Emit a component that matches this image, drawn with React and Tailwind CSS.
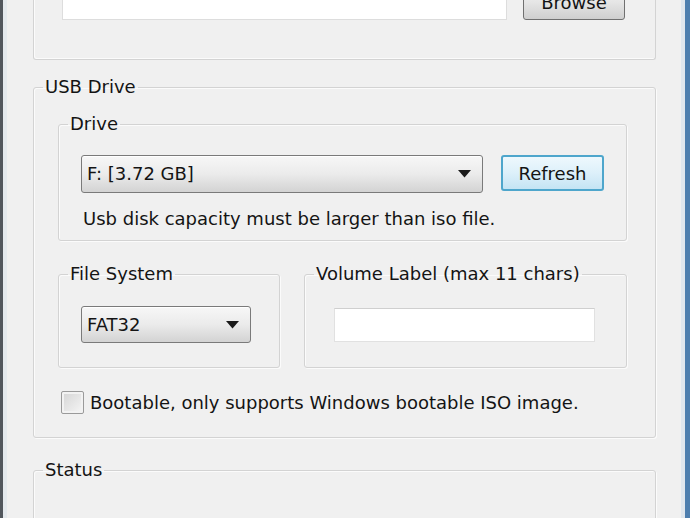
import React from 'react';

const font = "font-['DejaVu_Sans','Verdana',sans-serif]";

function Arrow() {
  return (
    <svg width="13" height="8" viewBox="0 0 13 8" className="shrink-0">
      <path d="M0 0 H13 L6.5 7.5 Z" fill="#1a1a1a" />
    </svg>
  );
}

function Combo({ value, className }) {
  return (
    <div
      className={`flex shrink-0 items-center justify-between rounded-[3px] border border-[#7a7a7a] bg-gradient-to-b from-[#f7f7f7] via-[#ebebeb] to-[#d3d3d3] pl-[5px] pr-[11px] text-[18px] leading-none text-[#141414] shadow-[inset_0_1px_0_#fff] ${className}`}
    >
      <span>{value}</span>
      <Arrow />
    </div>
  );
}

function Group({ label, className = '', children }) {
  return (
    <fieldset
      className={`shrink-0 rounded-[3px] border border-[#d3d3d3] shadow-[inset_1px_1px_0_#fbfbfb,1px_1px_0_#fbfbfb] ${className}`}
    >
      <legend className="ml-[9px] px-[2px] text-[18px] leading-[20px] text-[#141414]">{label}</legend>
      {children}
    </fieldset>
  );
}

export default function App() {
  return (
    <div className={`flex h-[518px] w-[690px] overflow-hidden bg-[#f0f0f0] ${font}`}>
      {/* window frame, left */}
      <div className="w-[3px] bg-[#52575d]" />
      <div className="w-[4px] bg-[#e4e9ed]" />

      <div className="flex flex-1 flex-col pl-[26px] pr-[25px]">
        {/* ISO path group (top cut off) */}
        <div className="mt-[-30px] flex h-[90px] shrink-0 items-end rounded-b-[3px] border-x border-b border-[#d3d3d3] pb-[39px] pl-[28px] shadow-[inset_1px_-1px_0_#fbfbfb]">
          <div className="h-[30px] w-[445px] border border-[#dddddd] bg-white" />
          <div className="ml-[16px] flex h-[36px] w-[102px] items-center justify-center rounded-[3px] border border-[#707070] bg-gradient-to-b from-[#f4f4f4] via-[#e6e6e6] to-[#cfcfcf] text-[18px] text-[#141414] shadow-[inset_0_1px_0_#fff]">
            Browse
          </div>
        </div>

        {/* USB Drive */}
        <Group label="USB Drive" className="mt-[17px] pb-[23px]">
          <Group label="Drive" className="ml-[24px] mr-[28px] mt-[17px] pb-[11px]">
            <div className="ml-[22px] mt-[21px] flex items-start">
              <Combo value="F: [3.72 GB]" className="h-[38px] w-[402px]" />
              <div className="ml-[18px] flex h-[36px] w-[103px] items-center justify-center rounded-[3px] border-2 border-[#4ea6cc] bg-gradient-to-b from-[#eef8fd] via-[#ddf0fa] to-[#c4e4f4] text-[18px] text-[#141414]">
                Refresh
              </div>
            </div>
            <p className="ml-[24px] mt-[16px] text-[18px] leading-[20px] text-[#141414]">
              Usb disk capacity must be larger than iso file.
            </p>
          </Group>

          <div className="ml-[24px] mt-[23px] flex gap-[24px]">
            <Group label="File System" className="w-[222px] pb-[24px]">
              <Combo value="FAT32" className="ml-[22px] mt-[22px] h-[37px] w-[170px]" />
            </Group>
            <Group label="Volume Label (max 11 chars)" className="w-[323px]">
              <div className="ml-[29px] mt-[24px] h-[34px] w-[261px] border border-[#e1e1e1] border-t-[#cfcfcf] bg-white" />
            </Group>
          </div>

          <label className="ml-[27px] mt-[23px] flex items-center gap-[6px] text-[18px] leading-[23px] text-[#141414]">
            <span className="h-[23px] w-[23px] shrink-0 rounded-[2px] border border-[#9a9a9a] bg-gradient-to-br from-[#d4d4d4] to-[#f6f6f6] shadow-[inset_0_0_0_2px_#f2f2f2]" />
            Bootable, only supports Windows bootable ISO image.
          </label>
        </Group>

        {/* Status */}
        <Group label="Status" className="mt-[22px] h-[100px]" />
      </div>

      {/* window frame, right */}
      <div className="w-[4px] bg-[#dfe6ed]" />
      <div className="w-[5px] bg-[#4d7eae]" />
    </div>
  );
}
